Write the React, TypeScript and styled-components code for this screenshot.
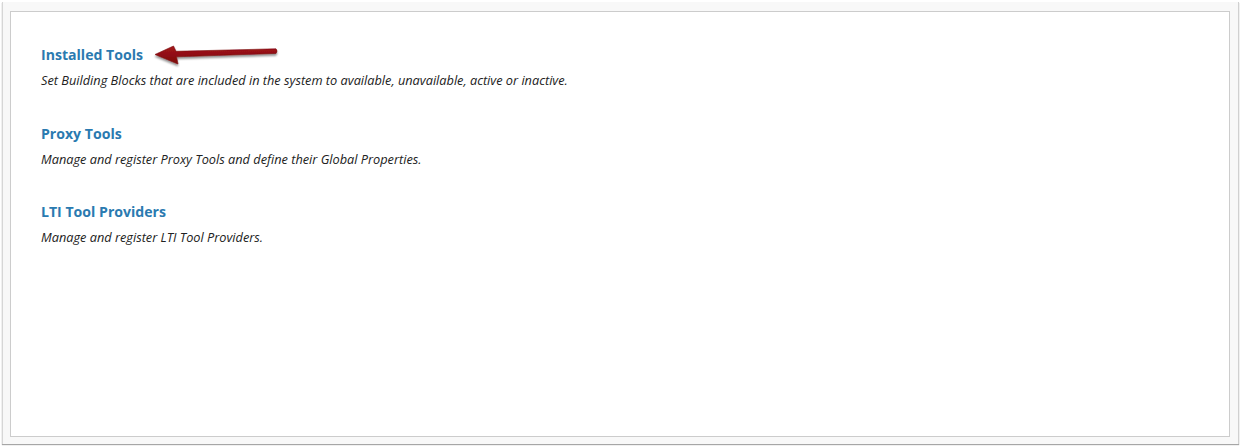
import React from "react";
import styled, { createGlobalStyle } from "styled-components";

const Global = createGlobalStyle`
  html, body { margin: 0; padding: 0; background: #ffffff; }
  body { font-family: "Open Sans", "Noto Sans", sans-serif; }
`;

const Page = styled.div`
  width: 1242px;
  height: 447px;
  box-sizing: border-box;
  padding: 2px 3px 3px 2px;
  background: #ffffff;
`;

const Frame = styled.div`
  height: 100%;
  box-sizing: border-box;
  background: #f8f8f8;
  border-left: 1px solid #d6d6d6;
  border-right: 1px solid #d0d0d0;
  box-shadow: 0 1px 1px rgba(0, 0, 0, 0.35);
  padding: 9px 8px 7px 7px;
  display: flex;
`;

const Panel = styled.div`
  position: relative;
  flex: 1;
  background: #ffffff;
  border: 1px solid #cccccc;
  padding: 33px 30px 0 30px;
  display: flex;
  flex-direction: column;
`;

const Section = styled.section`
  margin-bottom: 34.5px;
`;

const Title = styled.a`
  display: block;
  font-family: "Open Sans", sans-serif;
  font-weight: 700;
  font-size: 14.1px;
  line-height: 20px;
  color: #2a7ab0;
  text-decoration: none;
`;

const Desc = styled.p`
  margin: 6px 0 0 0;
  font-family: "Open Sans", sans-serif;
  font-style: italic;
  font-size: 12.75px;
  line-height: 18px;
  color: #222222;
`;

const Arrow = styled.svg`
  position: absolute;
  left: 140px;
  top: 30px;
  width: 150px;
  height: 40px;
  overflow: visible;
`;

const items = [
  {
    title: "Installed Tools",
    desc: "Set Building Blocks that are included in the system to available, unavailable, active or inactive.",
  },
  {
    title: "Proxy Tools",
    desc: "Manage and register Proxy Tools and define their Global Properties.",
  },
  {
    title: "LTI Tool Providers",
    desc: "Manage and register LTI Tool Providers.",
  },
];

export default function App() {
  return (
    <>
      <Global />
      <Page>
        <Frame>
          <Panel>
            {items.map((it) => (
              <Section key={it.title}>
                <Title href="#">{it.title}</Title>
                <Desc>{it.desc}</Desc>
              </Section>
            ))}
            {/* annotation arrow; panel origin at page (11,13) */}
            <Arrow viewBox="140 30 150 40">
              <defs>
                <filter id="sh" x="-20%" y="-50%" width="140%" height="200%">
                  <feGaussianBlur in="SourceAlpha" stdDeviation="1.2" />
                  <feOffset dx="0" dy="1.5" result="b" />
                  <feComponentTransfer>
                    <feFuncA type="linear" slope="0.45" />
                  </feComponentTransfer>
                  <feMerge>
                    <feMergeNode />
                    <feMergeNode in="SourceGraphic" />
                  </feMerge>
                </filter>
                <linearGradient id="ag" x1="0" y1="0" x2="0" y2="1">
                  <stop offset="0" stopColor="#a3161b" />
                  <stop offset="1" stopColor="#7d070b" />
                </linearGradient>
              </defs>
              <g transform="translate(-11,-13)" filter="url(#sh)">
                <path
                  d="M155 55.5 L173.5 47 L176 52.3 L276 49.8 Q278 52 276 54.4 L176.5 57.8 L178 65 Z"
                  fill="url(#ag)"
                  stroke="#7a0a0d"
                  strokeWidth="0.6"
                  strokeLinejoin="round"
                />
              </g>
            </Arrow>
          </Panel>
        </Frame>
      </Page>
    </>
  );
}
